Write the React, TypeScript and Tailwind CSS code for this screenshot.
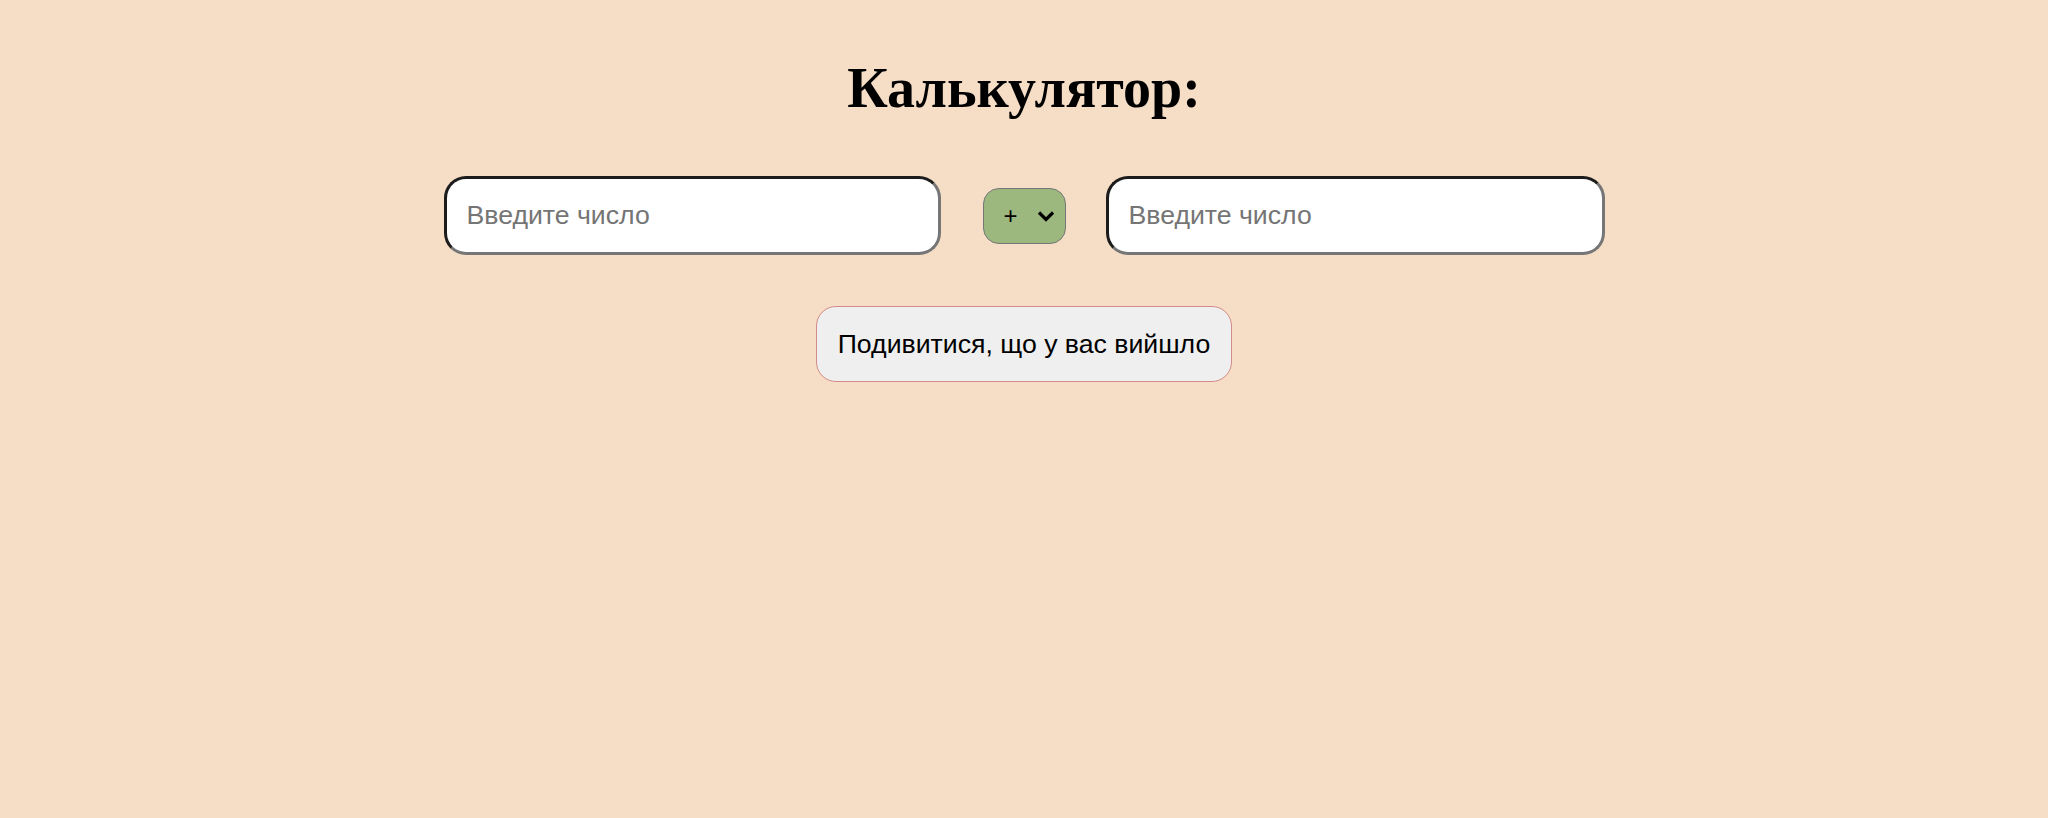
import React from "react";

export default function App() {
  return (
    <div className="min-h-[818px] w-full bg-[#f5ddc6] flex flex-col items-center">
      <h1
        className="mt-[56px] text-[56px] leading-[64px] font-bold text-black"
        style={{ fontFamily: '"Liberation Serif", "Times New Roman", serif' }}
      >
        Калькулятор:
      </h1>
      <div
        className="mt-[56px] flex items-center"
        style={{ fontFamily: '"Liberation Sans", Arial, sans-serif' }}
      >
        <input
          type="text"
          placeholder="Введите число"
          className="w-[497px] h-[79px] rounded-[22px] bg-white border-[3px] border-solid border-t-[#1c1c1c] border-l-[#1c1c1c] border-r-[#767676] border-b-[#767676] pl-[20px] text-[26.67px] text-black placeholder:text-[#757575] outline-none"
        />
        <div className="ml-[42px] w-[83px] h-[56px] rounded-[16px] bg-[#9db87f] border-[1.5px] border-solid border-[#767676] flex items-center pl-[20px]">
          <span className="text-[24px] leading-none text-black">+</span>
          <svg
            className="ml-[19px]"
            width="18"
            height="12"
            viewBox="0 0 18 12"
            fill="none"
          >
            <path d="M2 2.5 L9 9.5 L16 2.5" stroke="#000" strokeWidth="3.2" strokeLinecap="butt" strokeLinejoin="miter" />
          </svg>
        </div>
        <input
          type="text"
          placeholder="Введите число"
          className="ml-[40px] w-[499px] h-[79px] rounded-[22px] bg-white border-[3px] border-solid border-t-[#1c1c1c] border-l-[#1c1c1c] border-r-[#767676] border-b-[#767676] pl-[20px] text-[26.67px] text-black placeholder:text-[#757575] outline-none"
        />
      </div>
      <button
        className="mt-[51px] w-[416px] h-[76px] rounded-[20px] bg-[#efefef] border border-solid border-[#d48a8a] text-[26.67px] text-black"
        style={{ fontFamily: '"Liberation Sans", Arial, sans-serif' }}
      >
        Подивитися, що у вас вийшло
      </button>
    </div>
  );
}
